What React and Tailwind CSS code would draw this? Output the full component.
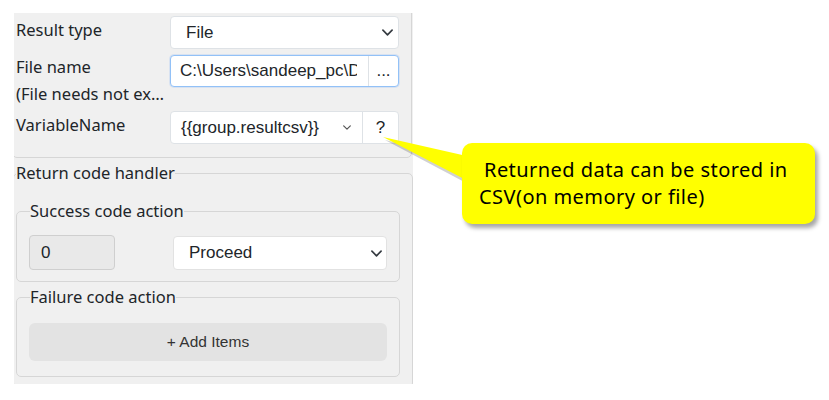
const Chevron = ({ className }) => (
  <svg viewBox="0 0 12 7" className={className} fill="none" stroke="currentColor" strokeWidth="1.8" strokeLinecap="round" strokeLinejoin="round">
    <path d="M1 1l5 5 5-5" />
  </svg>
);

export default function App() {
  return (
    <div className="relative w-[829px] h-[400px] bg-white overflow-hidden">
      <div className="ml-[14px] mt-[13px] w-[399px] h-[371px] overflow-hidden bg-[#f0f0f0] font-['Noto_Sans',sans-serif] text-[16.5px] leading-[22px] text-[#212529]">
        {/* upper box */}
        <div className="-mt-[5px] -ml-[2px] w-[400px] border border-[#d6d6d6] rounded-[5px] pl-[3px] pr-[12px] pt-[7px] pb-[13px]">
          <div className="flex items-start">
            <div className="w-[154px] pt-[3px]">Result type</div>
            <div className="w-[229px] h-[33px] bg-white border border-[#dee2e6] rounded-[4px] flex items-center justify-between pl-[15px] pr-[5px] font-['Liberation_Sans',Arial,sans-serif] text-[17px]">
              <span>File</span>
              <Chevron className="w-[11px] h-[7px] text-[#343a40]" />
            </div>
          </div>
          <div className="flex items-start mt-[6px]">
            <div className="w-[154px] pt-[1px] flex flex-col">
              <span>File name</span>
              <span className="mt-[5px] whitespace-nowrap">(File needs not ex…</span>
            </div>
            <div className="w-[229px] h-[32px] bg-white border border-[#92c1f7] rounded-[4px] flex shadow-[0_0_0_1px_rgba(13,110,253,0.10)] font-['Liberation_Sans',Arial,sans-serif] text-[17px]">
              <div className="w-[197px] shrink-0 pl-[9px] flex items-center">
                <div className="w-[177px] overflow-hidden whitespace-nowrap">C:\Users\sandeep_pc\Documents</div>
              </div>
              <div className="flex-1 border-l border-[#dee2e6] flex items-center justify-center">...</div>
            </div>
          </div>
          <div className="flex items-start mt-[6px]">
            <div className="w-[154px] pt-[3px]">VariableName</div>
            <div className="w-[229px] h-[33px] bg-white border border-[#dee2e6] rounded-[4px] flex font-['Liberation_Sans',Arial,sans-serif] text-[17px]">
              <div className="w-[191px] flex items-center justify-between pl-[10px] pr-[11px]">
                <span>{"{{group.resultcsv}}"}</span>
                <Chevron className="w-[8px] h-[5px] text-[#555]" />
              </div>
              <div className="flex-1 border-l border-[#dee2e6] flex items-center justify-center">?</div>
            </div>
          </div>
        </div>

        {/* return code handler */}
        <fieldset className="mt-[4px] -ml-[1px] w-[400px] border border-[#d6d6d6] rounded-[5px] pl-[2px] pr-[12px] pb-[10px]">
          <legend className="leading-[22px]">Return code handler</legend>
          <fieldset className="mt-[16px] border border-[#d6d6d6] rounded-[5px] px-[12px] pt-[13px] pb-[11px]">
            <legend className="ml-px leading-[22px]">Success code action</legend>
            <div className="flex items-start justify-between font-['Liberation_Sans',Arial,sans-serif] text-[17px]">
              <div className="w-[86px] h-[35px] bg-[#e9e9e9] border border-[#cfcfcf] rounded-[4px] flex items-center pl-[11px]">0</div>
              <div className="mt-px w-[214px] h-[34px] bg-white border border-[#e2e2e2] rounded-[4px] flex items-center justify-between pl-[15px] pr-[4px]">
                <span>Proceed</span>
                <Chevron className="w-[11px] h-[7px] text-[#343a40]" />
              </div>
            </div>
          </fieldset>
          <fieldset className="mt-[4px] border border-[#d6d6d6] rounded-[5px] px-[12px] pt-[15px] pb-[15px]">
            <legend className="ml-px leading-[22px]">Failure code action</legend>
            <div className="h-[38px] bg-[#e3e3e3] rounded-[6px] flex items-center justify-center font-['Liberation_Sans',Arial,sans-serif] text-[15.5px] text-[#333]">
              + Add Items
            </div>
          </fieldset>
        </fieldset>
      </div>

      {/* callout tail */}
      <svg className="absolute left-[370px] top-[125px] w-[100px] h-[70px]" viewBox="0 0 100 70">
        <polygon points="15,15 100,35 100,60" fill="rgba(0,0,0,0.18)" />
        <polygon points="13,12 100,31.8 100,57" fill="#ffff00" />
      </svg>
      {/* callout box */}
      <div className="absolute left-[462px] top-[143px] w-[353px] h-[81px] bg-[#ffff00] rounded-[10px] shadow-[3px_4px_4px_rgba(0,0,0,0.35)] pl-[17px] pt-[13px] font-['Noto_Sans',sans-serif] text-[20px] tracking-[0.45px] leading-[27px] text-black">
        <div className="pl-[5px]">Returned data can be stored in</div>
        <div>CSV(on memory or file)</div>
      </div>
    </div>
  );
}
